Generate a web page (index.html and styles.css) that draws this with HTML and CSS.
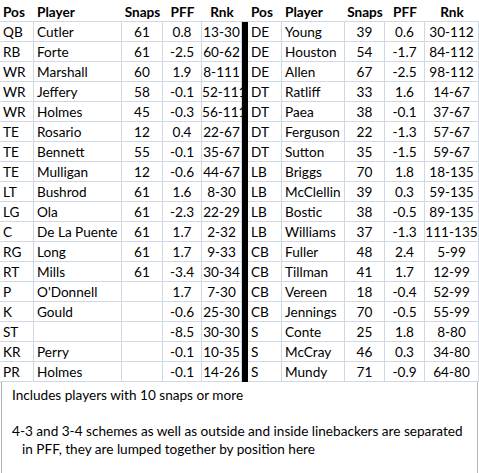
FILE: index.html
```html
<!DOCTYPE html>
<html>
<head>
<meta charset="utf-8">
<link rel="stylesheet" href="styles.css">
</head>
<body>
<table class="sheet">
<thead>
<tr>
<th class="txt w-pos">Pos</th><th class="txt w-pl">Player</th><th class="num w-sn">Snaps</th><th class="num w-pff">PFF</th><th class="num w-rk">Rnk</th>
<th class="w-bar"></th>
<th class="txt w-pos2">Pos</th><th class="txt w-pl2">Player</th><th class="num w-sn2">Snaps</th><th class="num w-pff2">PFF</th><th class="num w-rk2">Rnk</th>
</tr>
</thead>
<tbody>
<tr><td class="txt">QB</td><td class="txt">Cutler</td><td class="num">61</td><td class="num">0.8</td><td class="num">13-30</td><td class="bar"></td><td class="txt">DE</td><td class="txt">Young</td><td class="num">39</td><td class="num">0.6</td><td class="num">30-112</td></tr>
<tr><td class="txt">RB</td><td class="txt">Forte</td><td class="num">61</td><td class="num">-2.5</td><td class="num">60-62</td><td class="bar"></td><td class="txt">DE</td><td class="txt">Houston</td><td class="num">54</td><td class="num">-1.7</td><td class="num">84-112</td></tr>
<tr><td class="txt">WR</td><td class="txt">Marshall</td><td class="num">60</td><td class="num">1.9</td><td class="num">8-111</td><td class="bar"></td><td class="txt">DE</td><td class="txt">Allen</td><td class="num">67</td><td class="num">-2.5</td><td class="num">98-112</td></tr>
<tr><td class="txt">WR</td><td class="txt">Jeffery</td><td class="num">58</td><td class="num">-0.1</td><td class="num">52-111</td><td class="bar"></td><td class="txt">DT</td><td class="txt">Ratliff</td><td class="num">33</td><td class="num">1.6</td><td class="num">14-67</td></tr>
<tr><td class="txt">WR</td><td class="txt">Holmes</td><td class="num">45</td><td class="num">-0.3</td><td class="num">56-111</td><td class="bar"></td><td class="txt">DT</td><td class="txt">Paea</td><td class="num">38</td><td class="num">-0.1</td><td class="num">37-67</td></tr>
<tr><td class="txt">TE</td><td class="txt">Rosario</td><td class="num">12</td><td class="num">0.4</td><td class="num">22-67</td><td class="bar"></td><td class="txt">DT</td><td class="txt">Ferguson</td><td class="num">22</td><td class="num">-1.3</td><td class="num">57-67</td></tr>
<tr><td class="txt">TE</td><td class="txt">Bennett</td><td class="num">55</td><td class="num">-0.1</td><td class="num">35-67</td><td class="bar"></td><td class="txt">DT</td><td class="txt">Sutton</td><td class="num">35</td><td class="num">-1.5</td><td class="num">59-67</td></tr>
<tr><td class="txt">TE</td><td class="txt">Mulligan</td><td class="num">12</td><td class="num">-0.6</td><td class="num">44-67</td><td class="bar"></td><td class="txt">LB</td><td class="txt">Briggs</td><td class="num">70</td><td class="num">1.8</td><td class="num">18-135</td></tr>
<tr><td class="txt">LT</td><td class="txt">Bushrod</td><td class="num">61</td><td class="num">1.6</td><td class="num">8-30</td><td class="bar"></td><td class="txt">LB</td><td class="txt">McClellin</td><td class="num">39</td><td class="num">0.3</td><td class="num">59-135</td></tr>
<tr><td class="txt">LG</td><td class="txt">Ola</td><td class="num">61</td><td class="num">-2.3</td><td class="num">22-29</td><td class="bar"></td><td class="txt">LB</td><td class="txt">Bostic</td><td class="num">38</td><td class="num">-0.5</td><td class="num">89-135</td></tr>
<tr><td class="txt">C</td><td class="txt">De La Puente</td><td class="num">61</td><td class="num">1.7</td><td class="num">2-32</td><td class="bar"></td><td class="txt">LB</td><td class="txt">Williams</td><td class="num">37</td><td class="num">-1.3</td><td class="num">111-135</td></tr>
<tr><td class="txt">RG</td><td class="txt">Long</td><td class="num">61</td><td class="num">1.7</td><td class="num">9-33</td><td class="bar"></td><td class="txt">CB</td><td class="txt">Fuller</td><td class="num">48</td><td class="num">2.4</td><td class="num">5-99</td></tr>
<tr><td class="txt">RT</td><td class="txt">Mills</td><td class="num">61</td><td class="num">-3.4</td><td class="num">30-34</td><td class="bar"></td><td class="txt">CB</td><td class="txt">Tillman</td><td class="num">41</td><td class="num">1.7</td><td class="num">12-99</td></tr>
<tr><td class="txt">P</td><td class="txt">O'Donnell</td><td class="num"></td><td class="num">1.7</td><td class="num">7-30</td><td class="bar"></td><td class="txt">CB</td><td class="txt">Vereen</td><td class="num">18</td><td class="num">-0.4</td><td class="num">52-99</td></tr>
<tr><td class="txt">K</td><td class="txt">Gould</td><td class="num"></td><td class="num">-0.6</td><td class="num">25-30</td><td class="bar"></td><td class="txt">CB</td><td class="txt">Jennings</td><td class="num">70</td><td class="num">-0.5</td><td class="num">55-99</td></tr>
<tr><td class="txt">ST</td><td class="txt"></td><td class="num"></td><td class="num">-8.5</td><td class="num">30-30</td><td class="bar"></td><td class="txt">S</td><td class="txt">Conte</td><td class="num">25</td><td class="num">1.8</td><td class="num">8-80</td></tr>
<tr><td class="txt">KR</td><td class="txt">Perry</td><td class="num"></td><td class="num">-0.1</td><td class="num">10-35</td><td class="bar"></td><td class="txt">S</td><td class="txt">McCray</td><td class="num">46</td><td class="num">0.3</td><td class="num">34-80</td></tr>
<tr><td class="txt">PR</td><td class="txt">Holmes</td><td class="num"></td><td class="num">-0.1</td><td class="num">14-26</td><td class="bar"></td><td class="txt">S</td><td class="txt">Mundy</td><td class="num">71</td><td class="num">-0.9</td><td class="num">64-80</td></tr>
</tbody>
</table>
<div class="notes">
<p class="line">Includes players with 10 snaps or more</p>
<p class="line blank">&nbsp;</p>
<p class="line">4-3 and 3-4 schemes as well as outside and inside linebackers are separated</p>
<p class="line indent">in PFF, they are lumped together by position here</p>
</div>
</body>
</html>
```
FILE: styles.css
```css
html, body {
  margin: 0;
  padding: 0;
  background: #fff;
}
body {
  width: 479px;
  height: 473px;
  overflow: hidden;
  font-family: Lato, "Liberation Sans", sans-serif;
  font-size: 13.6px;
  color: #000;
}
.sheet {
  border-collapse: separate;
  border-spacing: 0;
  table-layout: fixed;
  width: 479px;
}
.sheet th, .sheet td {
  box-sizing: border-box;
  padding: 0;
  white-space: nowrap;
  overflow: visible;
  vertical-align: middle;
}
.sheet thead tr { height: 22px; }
.sheet tbody tr { height: 20px; }
.sheet th {
  font-weight: bold;
  border-bottom: 1px solid #d0d7e5;
  padding-top: 2px;
}
.sheet td {
  border-right: 1px solid #d0d7e5;
  border-bottom: 1px solid #d0d7e5;
  padding-top: 1px;
}
.sheet .txt { text-align: left; padding-left: 3px; }
.sheet .num { text-align: center; }
.sheet td.bar {
  background: #000;
  border-right: 0;
  border-bottom: 0;
}
.w-pos { width: 34px; }
.w-pl { width: 88px; }
.w-sn { width: 41px; }
.w-pff { width: 39px; }
.w-rk { width: 40px; }
.w-bar { width: 6px; }
.w-pos2 { width: 34px; }
.w-pl2 { width: 63px; }
.w-sn2 { width: 40px; }
.w-pff2 { width: 40px; }
.w-rk2 { width: 54px; }

.notes {
  margin: 0 0 0 1px;
  width: 477px;
  height: 100px;
  box-sizing: border-box;
  border-left: 1px solid #b4b4b4;
  border-right: 1px solid #b4b4b4;
  padding: 4px 0 0 10px;
  background: #fff;
}
.line {
  margin: 0;
  line-height: 18px;
  white-space: nowrap;
}
.indent { padding-left: 10px; }
```
